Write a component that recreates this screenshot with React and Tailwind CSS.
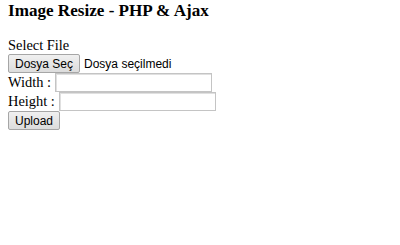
import React from "react";

export default function App() {
  return (
    <div className="min-h-screen bg-white px-2 text-black font-['Liberation_Serif',serif] text-[14.4px]">
      <h3 className="pt-[1px] text-[17.1px] font-bold leading-[19px]">
        Image Resize - PHP &amp; Ajax
      </h3>
      <form className="mt-[17px]">
        <div className="leading-[17px]">Select File</div>
        <div className="flex items-center h-[19px]">
          <button
            type="button"
            className="h-[19px] px-[6px] border border-[#a6a6a6] rounded-[2px] bg-gradient-to-b from-[#f0f0f0] to-[#dcdcdc] font-['Liberation_Sans',sans-serif] text-[12px] leading-[14px] text-black"
          >
            Dosya Seç
          </button>
          <span className="ml-[4px] font-['Liberation_Sans',sans-serif] text-[12px] leading-[14px]">
            Dosya seçilmedi
          </span>
        </div>
        <div className="flex items-center h-[19px]">
          <label htmlFor="width">Width :</label>
          <input
            id="width"
            type="text"
            className="ml-[4px] w-[157px] h-[19px] border border-[#c4c4c4] bg-white shadow-[inset_1px_1px_0_#e0e0e0]"
          />
        </div>
        <div className="flex items-center h-[19px]">
          <label htmlFor="height">Height :</label>
          <input
            id="height"
            type="text"
            className="ml-[4px] w-[157px] h-[19px] border border-[#c4c4c4] bg-white shadow-[inset_1px_1px_0_#e0e0e0]"
          />
        </div>
        <div className="flex items-center h-[19px]">
          <button
            type="submit"
            className="h-[19px] px-[6px] border border-[#a6a6a6] rounded-[2px] bg-gradient-to-b from-[#f0f0f0] to-[#dcdcdc] font-['Liberation_Sans',sans-serif] text-[12px] leading-[14px] text-black"
          >
            Upload
          </button>
        </div>
      </form>
    </div>
  );
}
